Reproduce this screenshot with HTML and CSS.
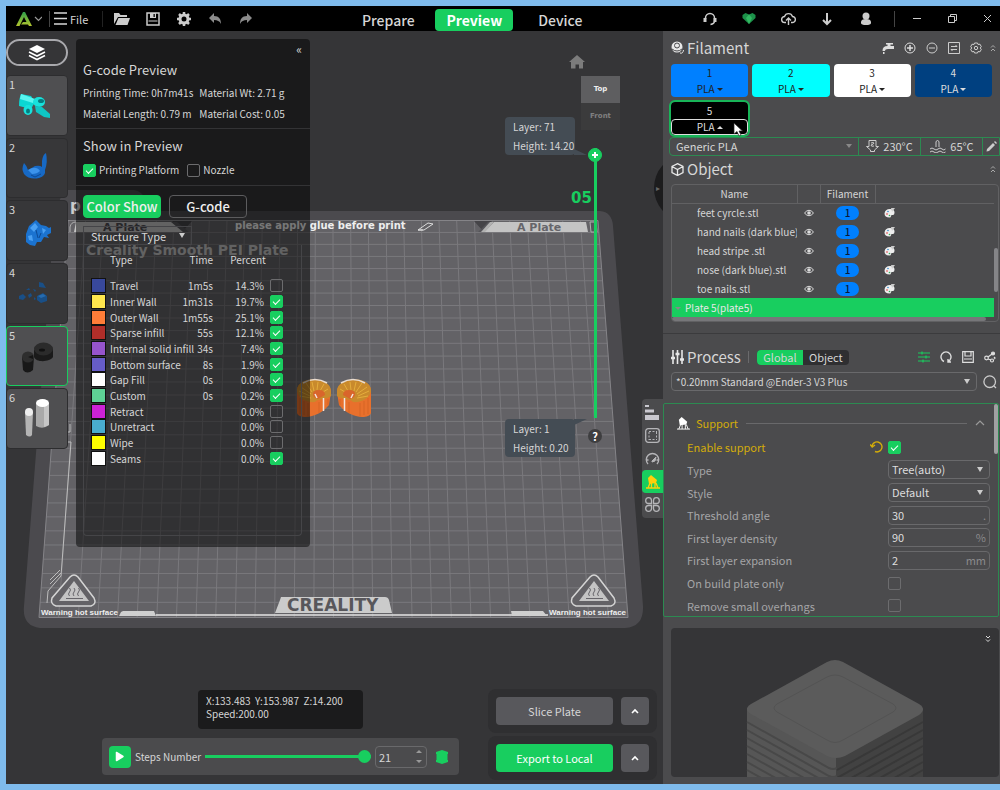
FILE: index.html
```html
<!DOCTYPE html>
<html lang="en">
<head>
    <meta charset="UTF-8">
    <meta name="viewport" content="width=device-width, initial-scale=1.0">
    <title>Creality Print</title>
    <link rel="stylesheet" href="styles.css">
</head>
<body>
<div class="app">
    <header class="topbar">
        <button class="logo" aria-label="Home">
            <svg width="27" height="16" viewBox="0 0 27 16"><defs><linearGradient id="lg" x1="0" y1="0" x2="0" y2="1"><stop offset="0" stop-color="#2f9e4a"/><stop offset="1" stop-color="#b4c52e"/></linearGradient></defs><path d="M8 1 1 15h3.500L9 6l2.500 5H8l-2 2.500h7l1 1.500h3L10 1z" fill="url(#lg)"/><path d="M20 6l3.500 3.500L27 6" fill="none" stroke="#999" stroke-width="1.200"/></svg>
        </button>
        <span class="bar-line"></span>
        <button class="file">
            <svg width="13" height="13" viewBox="0 0 13 13" stroke="#d8d8d8" stroke-width="1.300"><path d="M0 1h13M0 6.500h13M0 12h13"/></svg>File
        </button>
        <span class="bar-line dim"></span>
        <div class="tools">
            <button aria-label="Open"><svg width="16" height="14" viewBox="0 0 16 14" fill="#ccc"><path d="M0 12V1h5l1.500 2H13v2H4z"/><path d="M4.500 6H16l-2.500 7H1.500z"/></svg></button>
            <button aria-label="Save"><svg width="14" height="14" viewBox="0 0 14 14"><path d="M1 1h12v12H1z" fill="none" stroke="#ccc" stroke-width="1.500"/><path d="M4 1h6v5H4zM2.500 8.500h9v1h-9z" fill="#ccc"/><path d="M7.500 2h1.300v3H7.500z" fill="#000"/></svg></button>
            <button aria-label="Settings"><svg width="14" height="14" viewBox="0 0 14 14"><circle cx="7" cy="7" r="4" fill="none" stroke="#ccc" stroke-width="3"/><path d="M7 0v3M7 11v3M0 7h3M11 7h3M2 2l2 2M10 10l2 2M12 2l-2 2M4 10l-2 2" stroke="#ccc" stroke-width="2.500"/></svg></button>
            <button aria-label="Undo"><svg width="14" height="12" viewBox="0 0 14 12" fill="#8b8b8b"><path d="M6 0v3c5 0 7 3 7 8-1.500-3-3.500-4-7-4v3L1 5z"/></svg></button>
            <button aria-label="Redo"><svg width="14" height="12" viewBox="0 0 14 12" fill="#8b8b8b"><path d="M8 0v3C3 3 1 6 1 11c1.500-3 3.500-4 7-4v3l5-5z"/></svg></button>
        </div>
        <nav class="tabs">
            <button>Prepare</button>
            <button class="active">Preview</button>
            <button>Device</button>
        </nav>
        <div class="services">
            <button aria-label="Support"><svg width="14" height="14" viewBox="0 0 14 14" fill="none" stroke="#ccc"><path d="M2.500 7V6a4.500 4.500 0 0 1 9 0v3c0 2-1 3-4 3.500" stroke-width="1.500"/><path d="M2 6v4M12 6v4" stroke-width="3"/></svg></button>
            <button aria-label="Favourites"><svg width="14" height="13" viewBox="0 0 14 13"><path d="M7 12 .5 6 .5 3 3.500 1 7 2.500 10.500 1 13.500 3v3z" fill="#1c9149"/><path d="M7 12 4 6l3-3.500L10 6z" fill="#32b862"/></svg></button>
            <button aria-label="Upload"><svg width="15" height="14" viewBox="0 0 15 14" fill="none" stroke="#ccc" stroke-width="1.400"><path d="M5 10.500H3.800a3 3 0 0 1-.3-6 4.200 4.200 0 0 1 8 0 3 3 0 0 1-.3 6H10"/><path d="M7.500 13V6M5 8.500 7.500 6 10 8.500"/></svg></button>
            <button aria-label="Download"><svg width="12" height="14" viewBox="0 0 12 14" fill="none" stroke="#ccc" stroke-width="2"><path d="M6 1v11M2 8l4 4 4-4"/></svg></button>
            <button aria-label="Account"><svg width="12" height="14" viewBox="0 0 12 14" fill="#ccc"><circle cx="6" cy="4" r="3.500"/><path d="M1 10c0-2 2-3 5-3s5 1 5 3v1c0 1.500-2 2-5 2s-5-.5-5-2z"/></svg></button>
        </div>
        <span class="bar-line"></span>
        <div class="window-buttons">
            <button aria-label="Minimize"><svg width="8" height="8" viewBox="0 0 8 8" stroke="#ccc"><path d="M0 3.500h8"/></svg></button>
            <button aria-label="Restore"><svg width="9" height="9" viewBox="0 0 9 9" fill="none" stroke="#ccc"><path d="M.5 2.500h6v6h-6zM2.500 2.500v-2h6v6h-2"/></svg></button>
            <button aria-label="Close"><svg width="9" height="9" viewBox="0 0 9 9" stroke="#ccc"><path d="M1 1l7 7M8 1 1 8"/></svg></button>
        </div>
    </header>

    <main class="workspace">
        <section class="viewport">
            <svg class="scene" viewBox="6 31 657 753" preserveAspectRatio="xMidYMid slice">
                <!-- bed -->
                <path d="M64 190h70q8 1 12 10l6 11h448q12 1 13 15l30 380q1 21-18 22H40q-18-2-16-22l31-395z" fill="#4b4a4e"/>
                <path d="M68 220h530l30 397H39z" fill="#636266"/>
                <g id="grid" stroke="#7a797d" stroke-width="1"></g>
                <path d="M68 220.500h530l30 397H39z" fill="none" stroke="#858488"/>
                <path d="M474 221h18l-9 10zM192 221h-20l11 10z" fill="#454448"/>
                <path d="M492 222h94l2 10H481zM76 222h98l10 10H74z" fill="#c4c4c4"/>
                <path d="M488 222h6l-10 10h-6zM171 222h6l12 10h-6z" fill="#555459"/>
                <path d="M481 232l9-10h4l-9 10z" fill="#b0b0b0"/>
                <path d="M590 222h6l1 10h-6z" fill="#555459" stroke="#b0b0b0"/>
                <path d="M70 232v-5q1-5 6-5" fill="none" stroke="#b0b0b0"/>
                <g class="bed-text">
                    <text class="tag" x="517" y="231" fill="#66656a">A Plate</text>
                    <text class="tag" x="103" y="231" fill="#4e4d52">A Plate</text>
                    <text x="235" y="229" fill="#eee">please apply glue before print</text>
                    <text class="plate-name" x="86" y="255" fill="#c4c4c4">Creality Smooth PEI Plate</text>
                    <text class="big" x="70" y="211" fill="#ccc">p</text>
                    <text class="big" x="571" y="203" fill="#18ce5f">05</text>
                    <text class="tiny" x="41" y="615" fill="#eee">Warning hot surface</text>
                    <text class="tiny" x="549" y="615" fill="#eee">Warning hot surface</text>
                </g>
                <path d="M418 230l10-7 5 1-9 6zM418 230h5" fill="none" stroke="#ddd"/>
                <!-- bottom edge decoration -->
                <path d="M156 615h392" stroke="#e4e4e4" stroke-width="1.500"/>
                <path d="M121 612l2-1h31l2 5h-37zM511 611h32l4 5h-35z" fill="#cfcfcf"/>
                <path d="M281 597h104q3 0 4 3l3 13H275l5-13z" fill="#cbcbcb"/>
                <text class="brand" x="287" y="611" fill="#58575b">CREALITY</text>
                <path d="M71 442l-10 134-13 15-1 12M50 580l10-10M50 584l11-11M71 442h-3M70 424v8h-3" fill="none" stroke="#bdbdbd"/>
                <g id="warn">
                    <path d="M70 577q4-4 8 0l16 21q3 6-3 8H56q-6-2-4-8z" fill="#636266" stroke="#d4d4d4" stroke-width="1.500"/>
                    <path d="M74 581l15 20H59z" fill="#c4c4c4"/>
                    <path d="M69.500 588q2 2 0 4t0 4M74 588q2 2 0 4t0 4M78.500 588q2 2 0 4t0 4M66 598.500h17" fill="none" stroke="#66656a"/>
                </g>
                <use href="#warn" x="520"/>
                <!-- sliced parts -->
                <g id="part">
                    <path d="M337 392c0-15 33-16 34-2v23c-1 4-9 5-15 3-7-2-12-5-17-11z" fill="#e8702c"/>
                    <path d="M337 391c0-15 33-16 34-1 0 8-10 13-18 12-3-4-12-2-16-6z" fill="#c98a2c"/>
                    <path d="M340 389l5 3M344 384l4 7M350 382l1 8M356 382l-2 9M362 383l-6 9M367 387l-10 7M369 391l-11 5M368 396l-11 2" stroke="#e5ad3c"/>
                    <path d="M343 395q0-5 6-5t6 4q0 4-5 5z" fill="#d9652b"/>
                    <path d="M341 383q12-7 24 0" fill="none" stroke="#e8dcd2" stroke-width="1.500"/>
                    <path d="M344.500 398v13M353 394l-2 4" stroke="#f3e6df" stroke-width="1.500"/>
                    <path d="M360 403v13M364 401v14M340 399v6M349 402v11M368 398v16" stroke="#cf5f24" stroke-width=".7"/>
                </g>
                <use href="#part" transform="matrix(-1 0 0 1 668 0)"/>
            </svg>

            <aside class="plates">
                <button class="all-plates" aria-label="All plates"><svg width="18" height="17" viewBox="0 0 18 17"><path d="M9 1l8 4-8 4-8-4z" fill="#fff"/><path d="M1 8l8 4 8-4M1 11.500l8 4 8-4" fill="none" stroke="#fff" stroke-width="1.600"/></svg></button>
                <div class="plate-list">
                    <button class="plate light">1<svg viewBox="0 0 60 60"><path d="M15 19l10 2 4 6-4 7-12-3q0-8 2-12z" fill="#0bd7d3"/><path d="M15 19l14 5-2 4-13-4z" fill="#5af5f0"/><ellipse cx="33" cy="27" rx="6" ry="5" fill="#18e2dc"/><ellipse cx="35" cy="26" rx="3" ry="2" fill="#067c80"/><ellipse cx="22" cy="35" rx="4.500" ry="5" fill="#18e2dc"/><ellipse cx="22" cy="36" rx="2" ry="2.500" fill="#067c80"/><path d="M29 31l7 1 8 7v4l-6-1-8-5z" fill="#0fc6c4"/></svg></button>
                    <button class="plate">2<svg viewBox="0 0 60 60"><path d="M18 25q3 3 4 7l7-4q5-1 7 1 0-1 0-6 1-7 4-8 2 9-1 17 1 6-6 8-10 2-15-4-3-5 0-11z" fill="#1769c5"/><path d="M22 32q8-5 12 1-3 3-8 3z" fill="#3b93ec"/><path d="M25 37l4 2 6-3" fill="none" stroke="#0d4a95"/></svg></button>
                    <button class="plate">3<svg viewBox="0 0 60 60"><path d="M20 34l3-8 7-6 5 5 5 1 3 2 2-1v6l-4 2 2 3-5-1-3 5h-4l-2 4-5-1-4-3z" fill="#1b73d0"/><path d="M24 28l5-5 3 4-4 5zM36 28l4 2-3 4zM22 36l4-1 1 6-4-1z" fill="#4aa0f2"/><path d="M30 30l2 8M35 33l-2 5" stroke="#0d4a95"/></svg></button>
                    <button class="plate">4<svg viewBox="0 0 60 60"><path d="M33 19l4 1 3 5-7-1zM31 33l6-3 4 3v5l-6 2-4-3zM13 33l4-2 3 3-3 3-4-1zM20 27l3-2 1 2zM22 32l3-2 1 3-3 2zM27 26l3 1-1 2zM28 34l2 2-2 1z" fill="#194f87"/><path d="M32 33l5-2 3 2-5 2z" fill="#256bb0"/></svg></button>
                    <button class="plate light selected">5<svg viewBox="0 0 60 60"><path d="M28 24v7c2 6 16 5 19 0v-8z" fill="#1a1a1a"/><ellipse cx="37.500" cy="23" rx="9.500" ry="6.500" fill="#2b2b2b"/><ellipse cx="36" cy="24" rx="3" ry="1.500" fill="#111"/><path d="M16 31l1 13q4 5 10 0l1-13z" fill="#181818"/><ellipse cx="22" cy="31" rx="6" ry="5.500" fill="#2e2e2e"/><path d="M22 31l5-2v4z" fill="#151515"/></svg></button>
                    <button class="plate light">6<svg viewBox="0 0 60 60"><path d="M30 15v23q7 4 13-1V15z" fill="#a9a9a9"/><path d="M38 17v22l5-2V15z" fill="#c6c6c6"/><ellipse cx="36.500" cy="15" rx="6.500" ry="4" fill="#fff"/><path d="M19 24l1 23q4 3 6 0l1-23z" fill="#b4b4b4"/><ellipse cx="23" cy="24" rx="4" ry="4" fill="#eee"/></svg></button>
                </div>
            </aside>

            <section class="gcode-panel">
                <button class="collapse" aria-label="Collapse">«</button>
                <div class="panel-part">
                    <h2>G-code Preview</h2>
                    <dl class="stats">
                        <div><dt>Printing Time:</dt> <dd>0h7m41s</dd></div>
                        <div><dt>Material Wt:</dt> <dd>2.71 g</dd></div>
                        <div><dt>Material Length:</dt> <dd>0.79 m</dd></div>
                        <div><dt>Material Cost:</dt> <dd>0.05</dd></div>
                    </dl>
                </div>
                <div class="panel-part show-in">
                    <h2>Show in Preview</h2>
                    <label><input type="checkbox" checked>Printing Platform</label>
                    <label><input type="checkbox">Nozzle</label>
                </div>
                <div class="panel-part legend-part">
                    <div class="mode">
                        <button class="active">Color Show</button>
                        <button>G-code</button>
                    </div>
                    <div class="select structure"><select aria-label="Color scheme"><option>Structure Type</option></select></div>
                    <div class="legend">
                        <table>
                            <colgroup><col class="swatch-col"><col><col class="time-col"><col class="percent-col"><col class="check-col"></colgroup>
                            <thead><tr><th></th><th>Type</th><th>Time</th><th colspan="2">Percent</th></tr></thead>
                            <tbody>
                                <tr><td><i class="travel"></i></td><td>Travel</td><td>1m5s</td><td>14.3%</td><td><input type="checkbox" aria-label="Travel"></td></tr>
                                <tr><td><i class="inner"></i></td><td>Inner Wall</td><td>1m31s</td><td>19.7%</td><td><input type="checkbox" aria-label="Inner Wall" checked></td></tr>
                                <tr><td><i class="outer"></i></td><td>Outer Wall</td><td>1m55s</td><td>25.1%</td><td><input type="checkbox" aria-label="Outer Wall" checked></td></tr>
                                <tr><td><i class="sparse"></i></td><td>Sparse infill</td><td>55s</td><td>12.1%</td><td><input type="checkbox" aria-label="Sparse infill" checked></td></tr>
                                <tr><td><i class="solid"></i></td><td>Internal solid infill</td><td>34s</td><td>7.4%</td><td><input type="checkbox" aria-label="Internal solid infill" checked></td></tr>
                                <tr><td><i class="bottom"></i></td><td>Bottom surface</td><td>8s</td><td>1.9%</td><td><input type="checkbox" aria-label="Bottom surface" checked></td></tr>
                                <tr><td><i class="gap"></i></td><td>Gap Fill</td><td>0s</td><td>0.0%</td><td><input type="checkbox" aria-label="Gap Fill" checked></td></tr>
                                <tr><td><i class="custom"></i></td><td>Custom</td><td>0s</td><td>0.2%</td><td><input type="checkbox" aria-label="Custom" checked></td></tr>
                                <tr><td><i class="retract"></i></td><td>Retract</td><td></td><td>0.0%</td><td><input type="checkbox" aria-label="Retract"></td></tr>
                                <tr><td><i class="unretract"></i></td><td>Unretract</td><td></td><td>0.0%</td><td><input type="checkbox" aria-label="Unretract"></td></tr>
                                <tr><td><i class="wipe"></i></td><td>Wipe</td><td></td><td>0.0%</td><td><input type="checkbox" aria-label="Wipe"></td></tr>
                                <tr><td><i class="seams"></i></td><td>Seams</td><td></td><td>0.0%</td><td><input type="checkbox" aria-label="Seams" checked></td></tr>
                            </tbody>
                        </table>
                    </div>
                </div>
            </section>

            <button class="home" aria-label="Reset view"><svg width="16" height="14" viewBox="0 0 16 14" fill="#7c7c7c"><path d="M8 0l8 7h-2v6.500h-4V9.500H6.500v4H2V7H0z"/></svg></button>
            <div class="view-cube"><span>Top</span><span>Front</span></div>
            <div class="layer-tip upper">Layer: 71<br>Height: 14.20</div>
            <div class="layer-tip lower">Layer: 1<br>Height: 0.20</div>
            <input class="layer-slider" type="range" min="1" max="71" value="71" aria-label="Layer">
            <button class="help">?</button>
            <button class="fold-side" aria-label="Hide sidebar">▸</button>

            <nav class="param-tabs">
                <button aria-label="Quality"><svg width="15" height="15" viewBox="0 0 15 15" fill="#c9c8cf"><path d="M0 0h4v2H0zM0 4.500h9v3H0zM0 10h14v5H0z"/></svg></button>
                <button aria-label="Strength"><svg width="15" height="15" viewBox="0 0 15 15" fill="none" stroke="#b5b5b8"><rect x=".7" y=".7" width="13.600" height="13.600" rx="2.500" stroke-width="1.300"/><path d="M4 3.500h8M4 11.500h8M4 4v8M11.500 4v8" stroke-dasharray="2 1.500"/></svg></button>
                <button aria-label="Speed"><svg width="15" height="13" viewBox="0 0 15 13" fill="none" stroke="#b5b5b8"><path d="M3 12a6.200 6.200 0 1 1 9 0M1.500 8h2M13.500 8h-2" stroke-width="1.400"/><path d="M7 9l4-4-1 4-3 1z" fill="#b5b5b8"/></svg></button>
                <button class="active" aria-label="Support"><svg width="14" height="14" viewBox="0 0 14 14"><path d="M2 3l3-3 6 5-1 3-7 1z" fill="#ffcf0a"/><path d="M0 13h14M2 13l2-5M5.500 13V8M9 13V8M12 13l-2-5" stroke="#ffcf0a" stroke-width="1.300"/></svg></button>
                <button aria-label="Others"><svg width="15" height="15" viewBox="0 0 15 15" fill="none" stroke="#b5b5b8" stroke-width="1.300"><path d="M6.500 6.500H3.500a2.900 2.900 0 1 1 3-3zM8.500 6.500h3a2.900 2.900 0 1 0-3-3zM6.500 8.500H3.500a2.900 2.900 0 1 0 3 3zM8.500 8.500h3a2.900 2.900 0 1 1-3 3z"/></svg></button>
            </nav>

            <div class="position-tip">X:133.483&nbsp; Y:153.987&nbsp; Z:14.200<br>Speed:200.00</div>
            <div class="steps">
                <button class="play" aria-label="Play"><svg width="10" height="11" viewBox="0 0 10 11"><path d="M1.500 1.500v8l6.500-4z" fill="#fff" stroke="#fff" stroke-width="1.500" stroke-linejoin="round"/></svg></button>
                <label for="steps">Steps Number</label>
                <input id="steps" type="range" min="1" max="21" value="21">
                <div class="spin"><input type="text" value="21" aria-label="Step"><span></span></div>
                <svg width="14" height="14" viewBox="0 0 14 14" fill="#18ce5f"><path d="M7 0l6 2v2l-1 1 1 1-1 1 1 1-1 1 1 1v2l-6 2-6-2v-2l1-1-1-1 1-1-1-1 1-1-1-1V2z"/></svg>
            </div>
            <div class="actions">
                <div><button class="wide">Slice Plate</button><button class="more" aria-label="Slice options"><svg width="8" height="6" viewBox="0 0 8 6" fill="none" stroke="#fff" stroke-width="1.600"><path d="M1 5l3-3 3 3"/></svg></button></div>
                <div><button class="wide green">Export to Local</button><button class="more" aria-label="Export options"><svg width="8" height="6" viewBox="0 0 8 6" fill="none" stroke="#fff" stroke-width="1.600"><path d="M1 5l3-3 3 3"/></svg></button></div>
            </div>
        </section>

        <aside class="sidebar">
            <div class="head">
                <svg width="13" height="13" viewBox="0 0 13 13"><circle cx="6" cy="6" r="5.500" fill="#e8e8e8"/><circle cx="6" cy="4.500" r="2.500" fill="none" stroke="#4b4b4d"/><path d="M1 8q5 4 10 0M10 12q3 1 3-4" fill="none" stroke="#4b4b4d"/><path d="M9 12q3 1 3.500-3" fill="none" stroke="#e8e8e8"/></svg>
                <h1>Filament</h1>
                <div class="head-tools">
                    <button aria-label="Flush"><svg width="12" height="12" viewBox="0 0 12 12" fill="#ddd"><path d="M4 1h7v1.500H8.500V4H12v3H6q-3 0-3 2H.5q0-5 5-5V2.500H4zM1 10h1.500v2H1z"/></svg></button>
                    <button aria-label="Add"><svg width="12" height="12" viewBox="0 0 12 12" fill="none" stroke="#ddd"><circle cx="6" cy="6" r="5"/><path d="M3 6h6M6 3v6" stroke-width="1.500"/></svg></button>
                    <button aria-label="Remove"><svg width="12" height="12" viewBox="0 0 12 12" fill="none" stroke="#ccc"><circle cx="6" cy="6" r="5"/><path d="M3 6h6"/></svg></button>
                    <button aria-label="Sync"><svg width="12" height="12" viewBox="0 0 12 12" fill="none" stroke="#ccc"><path d="M.5.5h11v11H.5zM3 4.500h6L7.500 3M9 7.500H3L4.500 9"/></svg></button>
                    <button aria-label="Filament settings"><svg width="12" height="12" viewBox="0 0 12 12" fill="none" stroke="#ccc"><path d="M4.500 1h3l.5 1.500 2-.3 1.300 2.500L10.200 6l1.100 1.300L10 9.800l-2-.3L7.500 11h-3L4 9.500l-2 .3L.7 7.300 1.800 6 .7 4.700 2 2.200l2 .3z"/><circle cx="6" cy="6" r="1.700"/></svg></button>
                </div>
                <svg class="fold" width="6" height="8" viewBox="0 0 6 8" fill="none" stroke="#aaa"><path d="M1 3.500 3 1.500l2 2M1 7l2-2 2 2"/></svg>
            </div>
            <div class="filaments">
                <button class="f1">1<span>PLA</span></button>
                <button class="f2">2<span>PLA</span></button>
                <button class="f3">3<span>PLA</span></button>
                <button class="f4">4<span>PLA</span></button>
                <button class="f5 selected">5<span>PLA</span><svg class="pointer" width="10" height="15" viewBox="0 0 10 15"><path d="M1 1v11l3-2.500L6 14l2-1-2-4h3.500z" fill="#fff" stroke="#222" stroke-width=".7"/></svg></button>
            </div>
            <div class="preset">
                <div class="select"><select aria-label="Filament preset"><option>Generic PLA</option></select></div>
                <span><svg width="13" height="13" viewBox="0 0 13 13" fill="none" stroke="#ccc"><path d="M3 .5h7v6h2.500l-4 3.500v1.500h-4V10l-4-3.500H3zM5 3q3-1 3 0t-3 2q0 2 3 1"/></svg>230°C</span>
                <span><svg width="17" height="13" viewBox="0 0 17 13" fill="none" stroke="#ccc"><path d="M7 7V1.500q1.500-2 3 0V7M1 9q2-2 4 0t4 0 4 0 3.500 0M1 12q2-2 4 0t4 0 4 0 3.500 0"/></svg>65°C</span>
                <button aria-label="Edit preset"><svg width="11" height="11" viewBox="0 0 11 11" fill="#ccc"><path d="M1 8l6-6 2 2-6 6-2.500.5zM8 1l1-1 2 2-1 1z"/></svg></button>
            </div>

            <div class="head object-head">
                <svg width="13" height="13" viewBox="0 0 13 13" fill="none" stroke="#e8e8e8" stroke-width="1.300"><path d="M6.500.7 12 3.500v6l-5.500 3L1 9.500v-6zM1 3.500l5.500 3 5.500-3M6.500 6.500v6"/></svg>
                <h1>Object</h1>
                <svg class="fold" width="6" height="8" viewBox="0 0 6 8" fill="none" stroke="#aaa"><path d="M1 3.500 3 1.500l2 2M1 7l2-2 2 2"/></svg>
            </div>
            <div class="objects">
                <table>
                    <thead><tr><th>Name</th><th></th><th>Filament</th><th></th></tr></thead>
                    <tbody>
                        <tr><td>feet cyrcle.stl</td><td><svg class="eye"><use href="#eye"/></svg></td><td><b>1</b></td><td><svg class="palette"><use href="#palette"/></svg></td></tr>
                        <tr><td>hand nails (dark blue).stl</td><td><svg class="eye"><use href="#eye"/></svg></td><td><b>1</b></td><td><svg class="palette"><use href="#palette"/></svg></td></tr>
                        <tr><td>head stripe .stl</td><td><svg class="eye"><use href="#eye"/></svg></td><td><b>1</b></td><td><svg class="palette"><use href="#palette"/></svg></td></tr>
                        <tr><td>nose (dark blue).stl</td><td><svg class="eye"><use href="#eye"/></svg></td><td><b>1</b></td><td><svg class="palette"><use href="#palette"/></svg></td></tr>
                        <tr><td>toe nails.stl</td><td><svg class="eye"><use href="#eye"/></svg></td><td><b>1</b></td><td><svg class="palette"><use href="#palette"/></svg></td></tr>
                        <tr class="plate-row"><td colspan="4">Plate 5(plate5)</td></tr>
                    </tbody>
                </table>
                <div class="scroll-x"></div>
                <div class="scroll-y"></div>
            </div>

            <div class="head process-head">
                <svg width="13" height="14" viewBox="0 0 13 14" stroke="#e8e8e8" stroke-width="1.600"><path d="M2 0v14M6.500 0v14M11 0v14"/><path d="M0 8h4M4.500 4h4M9 9.500h4" stroke-width="2.500"/></svg>
                <h1>Process</h1>
                <span class="bar-line"></span>
                <div class="scope"><button class="active">Global</button><button>Object</button></div>
                <div class="head-tools">
                    <button aria-label="Advanced"><svg width="12" height="12" viewBox="0 0 12 12" stroke="#18ce5f" stroke-width="1.200"><path d="M0 2h12M0 6h12M0 10h12M4 .5v3M8 4.500v3M5 8.500v3"/></svg></button>
                    <button aria-label="Reset"><svg width="12" height="12" viewBox="0 0 12 12" fill="none" stroke="#ddd" stroke-width="1.400"><path d="M4 10.500A5 5 0 1 1 8 10.500M8 8v3h3"/></svg></button>
                    <button aria-label="Save preset"><svg width="12" height="12" viewBox="0 0 12 12" fill="none" stroke="#ddd" stroke-width="1.200"><path d="M.7.700h10.600v10.600H.7zM3 1v4h6V1M2 8h8"/></svg></button>
                    <button aria-label="Compare"><svg width="12" height="12" viewBox="0 0 12 12" fill="none" stroke="#ddd" stroke-width="1.200"><circle cx="2.500" cy="7" r="1.800"/><circle cx="9" cy="2.500" r="1.500" fill="#ddd"/><circle cx="8" cy="9.500" r="1.500"/><path d="M4 6l4-3M4 8l3 1M10 6l1 1-1 1"/></svg></button>
                </div>
            </div>
            <div class="process-preset">
                <div class="select"><select aria-label="Process preset"><option>*0.20mm Standard @Ender-3 V3 Plus</option></select></div>
                <button aria-label="Search"><svg width="14" height="14" viewBox="0 0 14 14" fill="none" stroke="#ccc" stroke-width="1.300"><circle cx="6.700" cy="6.700" r="5.800"/><path d="M11 11l2 2"/></svg></button>
            </div>

            <section class="params">
                <div class="params-title">
                    <svg width="13" height="13" viewBox="0 0 14 14"><path d="M2 3l3-3 6 5-1 3-7 1z" fill="#fff"/><path d="M0 13h14M2 13l2-5M5.500 13V8M9 13V8M12 13l-2-5" stroke="#fff"/></svg>
                    <h3>Support</h3><hr>
                    <svg width="10" height="6" viewBox="0 0 10 6" fill="none" stroke="#999" stroke-width="1.200"><path d="M1 5l4-4 4 4"/></svg>
                </div>
                <div class="rows">
                    <div class="row changed"><label for="p1">Enable support</label><svg width="13" height="12" viewBox="0 0 13 12" fill="none" stroke="#d3ac0a" stroke-width="1.400"><path d="M2 5.500A5 5 0 1 1 5 10.500M0 3.500l2.200 2.500L5 4"/></svg><div><input type="checkbox" id="p1" checked></div></div>
                    <div class="row"><label for="p2">Type</label><div class="select"><select id="p2"><option>Tree(auto)</option></select></div></div>
                    <div class="row"><label for="p3">Style</label><div class="select"><select id="p3"><option>Default</option></select></div></div>
                    <div class="row"><label for="p4">Threshold angle</label><div class="field"><input type="text" id="p4" value="30"><span>.</span></div></div>
                    <div class="row"><label for="p5">First layer density</label><div class="field"><input type="text" id="p5" value="90"><span>%</span></div></div>
                    <div class="row"><label for="p6">First layer expansion</label><div class="field"><input type="text" id="p6" value="2"><span>mm</span></div></div>
                    <div class="row"><label for="p7">On build plate only</label><div><input type="checkbox" id="p7"></div></div>
                    <div class="row"><label for="p8">Remove small overhangs</label><div><input type="checkbox" id="p8"></div></div>
                </div>
                <div class="scroll-y"></div>
            </section>

            <div class="hint">
                <svg viewBox="671 628 328 149" preserveAspectRatio="xMidYMin slice">
                    <path d="M747 708v90h89v-90z" fill="#565656"/>
                    <path d="M836 708v90h87v-90z" fill="#424242"/>
                    <g fill="none" stroke-width="2">
                        <path stroke="#484848" d="M747 722l82 46q4 2 8 0M747 730l82 46q4 2 8 0M747 738l82 46M747 746l82 46M747 754l82 46M747 762l82 46M747 770l82 46"/>
                        <path stroke="#383838" d="M923 722l-86 48M923 730l-86 48M923 738l-86 48M923 746l-86 48M923 754l-86 48M923 762l-86 48M923 770l-86 48"/>
                    </g>
                    <path d="M827 662q8-4 16 0l76 42q8 5 0 11l-74 41q-9 4-18 0l-76-42q-8-5 0-10z" fill="#5b5b5b"/>
                    <path d="M827 705m0-28q8-4 16 0l50 27q6 4 0 8l-50 28q-8 5-16 0l-50-28q-6-4 0-8z" fill="none" stroke="#535353"/>
                </svg>
                <button aria-label="Fold preview"><svg width="6" height="8" viewBox="0 0 6 8" fill="none" stroke="#ddd"><path d="M1 1l2 2 2-2M1 4.500l2 2 2-2"/></svg></button>
            </div>
        </aside>
    </main>
</div>

<svg class="symbols" width="0" height="0">
    <symbol id="eye" viewBox="0 0 10 8"><path d="M.5 4Q5-1.500 9.500 4 5 9.500.5 4z" fill="none" stroke="#ddd"/><circle cx="5" cy="4" r="1.800" fill="#ddd"/></symbol>
    <symbol id="palette" viewBox="0 0 11 10"><path d="M6 1Q1 1 .5 5.500q0 4 5 4 1.500 0 1.500-1.500t2-1q1.500 0 1.500-3Q10 1 6 1z" fill="#eee"/><path d="M7 0l4 0-3 4z" fill="#ccc"/><circle cx="3" cy="6" r=".8" fill="#d33"/><circle cx="4" cy="3.500" r=".8" fill="#38c"/><circle cx="5.500" cy="7.500" r=".8" fill="#3a5"/></symbol>
</svg>
<script src="grid.js"></script>
</body>
</html>
```
FILE: styles.css
```css
* {
    box-sizing: border-box;
}

body {
    margin: 0;
    background-color: #7fbbec;
    color: #d6d6d6;
    font-family: "Noto Sans CJK SC", "Noto Sans", sans-serif;
    font-size: 11px;
    line-height: 16px;
}

button, input, select {
    margin: 0;
    padding: 0;
    border: 0;
    background: none;
    color: inherit;
    font: inherit;
}

button svg {
    display: block;
    margin: auto;
}

h1, h2, h3, dl, dd {
    margin: 0;
    font-weight: normal;
}

input[type="checkbox"] {
    appearance: none;
    display: block;
    width: 13px;
    height: 13px;
    border: 1px solid #6c6c6e;
    border-radius: 2px;
}

input[type="checkbox"]:checked {
    border-color: #18ce5f;
    background-color: #18ce5f;
}

input[type="checkbox"]:checked::after {
    content: "";
    display: block;
    width: 6px;
    height: 3px;
    margin: 3px auto 0;
    border-left: 1px solid #fff;
    border-bottom: 1px solid #fff;
    transform: rotate(-45deg);
}

.select {
    position: relative;
    display: flex;
    border: 1px solid #69696b;
    border-radius: 4px;
}

.select select {
    appearance: none;
    width: 100%;
    outline: 0;
}

.select::after {
    content: "";
    position: absolute;
    right: 6px;
    top: 50%;
    margin-top: -3px;
    border: 3px solid transparent;
    border-top: 5px solid #ccc;
    border-bottom: 0;
}

.app {
    display: flex;
    flex-direction: column;
    height: 100vh;
    padding: 6px 0 6px 6px;
}

/* top bar */
.topbar {
    display: flex;
    align-items: center;
    height: 25px;
    padding-left: 9px;
    background-color: #000;
}

.bar-line {
    width: 1px;
    height: 16px;
    background-color: #444;
}

.bar-line.dim {
    margin-left: 14px;
    background-color: #222;
}

.logo {
    margin-right: 7px;
}

.file {
    display: flex;
    align-items: center;
    gap: 3px;
    margin-left: 4px;
}

.file svg {
    margin: 0;
}

.tools {
    display: flex;
    margin-left: 3px;
}

.tools button {
    width: 31px;
}

.tabs {
    display: flex;
    gap: 8px;
    margin-left: 88px;
    align-self: flex-end;
}

.tabs button {
    width: 78px;
    height: 22px;
    border-radius: 4px;
    font-size: 14px;
    font-weight: 500;
}

.tabs .active {
    background-color: #18ce5f;
    color: #fff;
    font-weight: bold;
}

.services {
    display: flex;
    gap: 9px;
    margin: 0 13px 0 auto;
}

.services button {
    width: 30px;
}

.window-buttons {
    display: flex;
    gap: 9px;
    margin-left: 9px;
}

.window-buttons button {
    width: 26px;
}

.workspace {
    display: grid;
    grid-template-columns: 1fr 337px;
    flex: 1;
    min-height: 0;
}

/* 3d view, everything else floats over it */
.viewport {
    position: relative;
    overflow: hidden;
    background-color: #353537;
}

.scene {
    position: absolute;
    width: 100%;
    height: 100%;
}

.bed-text text {
    font: bold 10px "DejaVu Sans", sans-serif;
}

.bed-text .tag {
    font-size: 11px;
}

.bed-text .plate-name {
    font-size: 14px;
}

.bed-text .big {
    font-size: 15px;
}

.bed-text .tiny {
    font: bold 8px "Liberation Sans", sans-serif;
}

.brand {
    font: bold 17px "DejaVu Sans", sans-serif;
}

.plates {
    position: absolute;
    left: 0;
    top: 8px;
    width: 62px;
}

.all-plates {
    width: 100%;
    height: 27px;
    margin-bottom: 9px;
    border: 2px solid #a9a9ad;
    border-radius: 14px;
}

.plate-list {
    display: grid;
    grid-template-rows: repeat(6, 1fr);
    gap: 2px;
    height: 374px;
}

.plate {
    position: relative;
    padding: 0 2px;
    border: 1px solid #2d2d2f;
    border-radius: 4px;
    background-color: #373739;
    display: flex;
    align-items: flex-start;
}

.plate svg {
    position: absolute;
    left: -1px;
    top: -1px;
    width: 60px;
    height: 60px;
}

.plate.light {
    background-color: #4f4f51;
}

.plate.selected {
    border-color: #18ce5f;
}

/* g-code panel */
.gcode-panel {
    position: absolute;
    left: 70px;
    top: 8px;
    width: 234px;
    height: 508px;
    padding-top: 23px;
    border-radius: 4px;
    background-color: rgba(0, 0, 0, 0.5);
    display: flex;
    flex-direction: column;
    font-size: 10px;
}

.collapse {
    position: absolute;
    right: 8px;
    top: 2px;
    font-size: 12px;
}

.panel-part {
    padding: 0 8px 0 7px;
    border-bottom: 1px solid #333335;
}

.gcode-panel h2 {
    font-size: 13px;
}

.stats {
    display: grid;
    grid-template-columns: max-content max-content;
    gap: 5px 6px;
    padding: 7px 0 6px;
    white-space: nowrap;
}

.stats dt, .stats dd {
    display: inline;
}

.show-in {
    display: flex;
    flex-wrap: wrap;
    column-gap: 8px;
    padding-top: 9px;
    padding-bottom: 7px;
}

.show-in h2 {
    width: 100%;
    margin-bottom: 8px;
}

.show-in label {
    display: flex;
    align-items: center;
    gap: 3px;
}

.legend-part {
    display: flex;
    flex-direction: column;
    flex: 1;
    padding-top: 9px;
    padding-bottom: 11px;
    border: 0;
}

.mode {
    display: flex;
    gap: 8px;
    margin-bottom: 8px;
}

.mode button {
    width: 78px;
    height: 23px;
    border: 1px solid #5c5c5e;
    border-radius: 4px;
    color: #eee;
    font-size: 13px;
    font-weight: 500;
}

.mode .active {
    border-color: #18ce5f;
    background-color: #18ce5f;
}

.structure {
    width: 109px;
    height: 19px;
    border-color: #444447;
    border-radius: 0;
    font-size: 11px;
}

.structure select {
    padding-left: 7px;
}

.legend {
    flex: 1;
    padding: 7px 18px 0 7px;
    border: 1px solid #454548;
    border-top: 0;
    border-radius: 0 0 4px 4px;
}

.legend table {
    width: 100%;
    height: 214px;
    border-collapse: collapse;
    table-layout: fixed;
    line-height: 15px;
}

.legend th, .legend td {
    padding: 0;
    text-align: right;
    font-weight: normal;
    white-space: nowrap;
}

.legend thead tr {
    height: 26px;
    vertical-align: top;
}

.legend th:nth-child(2), .legend td:nth-child(2) {
    text-align: left;
}

.legend th:last-child {
    text-align: center;
}

.swatch-col {
    width: 19px;
}

.time-col {
    width: 32px;
}

.percent-col {
    width: 51px;
}

.check-col {
    width: 19px;
}

.legend td input {
    margin-left: 6px;
}

.legend i {
    display: block;
    width: 15px;
    height: 15px;
    border: 1px solid #111;
}

.travel { background-color: #38489b; }
.inner { background-color: #ffe64d; }
.outer { background-color: #ff7d38; }
.sparse { background-color: #b02e29; }
.solid { background-color: #9654cc; }
.bottom { background-color: #665cc7; }
.gap, .seams { background-color: #fff; }
.custom { background-color: #5ed194; }
.retract { background-color: #cd22d6; }
.unretract { background-color: #49adcf; }
.wipe { background-color: #ff0; }

/* view controls */
.home {
    position: absolute;
    right: 78px;
    top: 24px;
}

.view-cube {
    position: absolute;
    right: 43px;
    top: 45px;
    width: 39px;
    font: bold 7px "DejaVu Sans", sans-serif;
    text-align: center;
}

.view-cube span {
    display: block;
    background-color: #5e5e60;
    color: #eee;
    line-height: 27px;
}

.view-cube span + span {
    background-color: #3b3b3c;
    color: #808080;
}

.layer-tip {
    position: absolute;
    right: 88px;
    width: 70px;
    height: 38px;
    padding-left: 8px;
    border-radius: 4px;
    background-color: #444c54;
    font-size: 10px;
    line-height: 19px;
    white-space: nowrap;
}

.layer-tip::after {
    content: "";
    position: absolute;
    left: 69px;
    border: 0 solid transparent;
    border-left: 13px solid #444c54;
}

.upper {
    top: 86px;
}

.upper::after {
    bottom: 0;
    border-top-width: 6px;
}

.lower {
    top: 388px;
}

.lower::after {
    top: 0;
    border-bottom-width: 6px;
}

.layer-slider {
    position: absolute;
    right: 61px;
    top: 117px;
    width: 14px;
    height: 270px;
    appearance: none;
    writing-mode: vertical-lr;
    direction: rtl;
}

.layer-slider::-webkit-slider-runnable-track {
    width: 3px;
    background-color: #18ce5f;
}

.layer-slider::-webkit-slider-thumb {
    appearance: none;
    width: 14px;
    height: 14px;
    margin-left: -6px;
    border: 1px solid #18ce5f;
    border-radius: 50%;
    background: linear-gradient(#fff, #fff) center / 6px 2px no-repeat, linear-gradient(#fff, #fff) center / 2px 6px no-repeat, #18ce5f;
}

.help {
    position: absolute;
    right: 61px;
    top: 398px;
    width: 14px;
    height: 14px;
    border-radius: 50%;
    background-color: #3e3e40;
    color: #fff;
    font-size: 11px;
    font-weight: bold;
    line-height: 14px;
}

.fold-side {
    position: absolute;
    right: -46px;
    top: 126px;
    width: 55px;
    height: 62px;
    padding-left: 2px;
    border-radius: 50%;
    background-color: #1c1c1d;
    color: #666;
    font-size: 8px;
    text-align: left;
}

.param-tabs {
    position: absolute;
    right: 0;
    top: 368px;
    width: 21px;
    padding: 2px 0;
    border-radius: 4px 0 0 4px;
    background-color: #4b4b4d;
}

.param-tabs button {
    display: block;
    width: 21px;
    height: 23px;
    border-radius: 4px 0 0 4px;
}

.param-tabs .active {
    background-color: #18ce5f;
}

.position-tip {
    position: absolute;
    left: 192px;
    bottom: 55px;
    width: 165px;
    height: 39px;
    padding: 4px 8px;
    border-radius: 4px;
    background-color: #1b1b1c;
    font-size: 10px;
    line-height: 13px;
    white-space: nowrap;
}

.steps {
    position: absolute;
    left: 96px;
    bottom: 9px;
    width: 357px;
    height: 37px;
    padding: 0 10px 0 7px;
    border-radius: 4px;
    background-color: #4b4b4d;
    display: flex;
    align-items: center;
    gap: 4px;
    font-size: 10px;
    white-space: nowrap;
}

.play {
    width: 22px;
    height: 22px;
    border-radius: 4px;
    background-color: #18ce5f;
}

.steps input[type="range"] {
    appearance: none;
    flex: 1;
    min-width: 0;
    height: 14px;
}

.steps input::-webkit-slider-runnable-track {
    height: 3px;
    background-color: #18ce5f;
}

.steps input::-webkit-slider-thumb {
    appearance: none;
    width: 13px;
    height: 13px;
    margin-top: -5px;
    border-radius: 50%;
    background-color: #18ce5f;
}

.spin {
    display: flex;
    align-items: center;
    width: 52px;
    height: 22px;
    margin-right: 4px;
    padding: 0 4px 0 3px;
    border: 1px solid #69696b;
    border-radius: 4px;
    font-size: 11px;
}

.spin input {
    flex: 1;
    min-width: 0;
}

.spin span::before, .spin span::after {
    content: "";
    display: block;
    border: 3px solid transparent;
    border-top: 0;
    border-bottom: 3px solid #999;
}

.spin span::after {
    margin-top: 7px;
    border-top: 3px solid #999;
    border-bottom: 0;
}

.actions {
    position: absolute;
    right: 6px;
    bottom: 4px;
    display: grid;
    gap: 3px;
}

.actions div {
    display: flex;
    gap: 8px;
    padding: 8px;
    border-radius: 8px;
    background-color: #2f2f31;
}

.actions button {
    width: 28px;
    height: 28px;
    border-radius: 4px;
    background-color: #58585c;
}

.actions .wide {
    width: 117px;
}

.actions .green {
    background-color: #18ce5f;
    color: #fff;
}

/* sidebar */
.sidebar {
    display: flex;
    flex-direction: column;
    min-width: 0;
    padding: 0 1px 7px 8px;
    background-color: #4b4b4d;
}

.head {
    display: flex;
    align-items: center;
    height: 33px;
}

.head h1 {
    margin-left: 3px;
    font-size: 15px;
}

.head-tools {
    display: flex;
    margin-left: auto;
}

.head-tools button {
    width: 22px;
}

.fold {
    margin: 0 3px;
}

.filaments {
    display: grid;
    grid-template-columns: repeat(4, 1fr);
    gap: 5px 4px;
    margin-right: 7px;
}

.filaments button {
    position: relative;
    height: 33px;
    border-radius: 4px;
    font-size: 10px;
    color: #222;
}

.filaments span {
    display: block;
}

.filaments span::after {
    content: "";
    display: inline-block;
    margin: 0 0 2px 2px;
    border: 3px solid transparent;
    border-top: 3px solid;
    border-bottom: 0;
}

.filaments .f1 { background-color: #0080ff; }
.filaments .f2 { background-color: #0ff; }
.filaments .f3 { background-color: #fff; }
.filaments .f4 { background-color: #004080; color: #ddd; }
.filaments .f5 { background-color: #000; color: #ddd; }

.filaments .selected {
    outline: 2px solid #18b458;
}

.filaments .selected span {
    border: 1px solid #ddd;
    border-radius: 4px;
    line-height: 14px;
}

.filaments .selected span::after {
    border-top: 0;
    border-bottom: 3px solid;
}

.pointer {
    position: absolute;
    right: 5px;
    bottom: -2px;
}

.preset {
    display: flex;
    height: 19px;
    margin: 2px -1px 0 -2px;
    border: 1px solid #2c8a51;
    border-radius: 4px 0 0 4px;
    line-height: 17px;
}

.preset .select {
    flex: 1;
    border: 0;
}

.preset .select::after {
    border-top: 4px solid #888;
}

.preset select {
    padding-left: 6px;
}

.preset span {
    display: flex;
    align-items: center;
    justify-content: center;
    gap: 4px;
    width: 62px;
    border-left: 1px solid #2c8a51;
}

.preset button {
    width: 17px;
    border-left: 1px solid #2c8a51;
}

.object-head {
    height: 28px;
    padding-bottom: 2px;
}

.object-head .fold {
    margin-left: auto;
}

.objects {
    position: relative;
    border: 1px solid #616163;
    border-radius: 4px;
    overflow: hidden;
    font-size: 10px;
}

.objects table {
    width: calc(100% - 4px);
    border-collapse: collapse;
    table-layout: fixed;
}

.objects th {
    height: 18px;
    padding: 0;
    border-right: 1px solid #616163;
    border-bottom: 1px solid #616163;
    font-weight: normal;
}

.objects th:last-child {
    border-right: 0;
}

.objects th:first-child {
    width: 125px;
}

.objects th:nth-child(2) {
    width: 23px;
}

.objects th:nth-child(3) {
    width: 55px;
}

.objects td {
    height: 19px;
    padding: 0;
    white-space: nowrap;
    overflow: hidden;
}

.objects td:first-child {
    padding-left: 25px;
}

.objects td:nth-child(2), .objects td:nth-child(3) {
    text-align: center;
}

.objects td:last-child {
    padding-left: 9px;
}

.objects b {
    display: block;
    width: 23px;
    height: 14px;
    margin: 0 auto;
    border-radius: 7px;
    background-color: #0080ff;
    color: #0a1a3a;
    font-weight: 500;
    line-height: 14px;
}

.eye {
    display: block;
    width: 10px;
    height: 8px;
    margin: 0 auto;
}

.palette {
    display: block;
    width: 11px;
    height: 10px;
}

.objects .plate-row td {
    padding-left: 13px;
    background-color: #18ce5f;
    color: #e8e8e8;
}

.plate-row td::before {
    content: "";
    float: left;
    margin: 7px 0 0 -10px;
    border: 3px solid transparent;
    border-top: 3px solid #888;
}

.scroll-x {
    width: calc(100% - 12px);
    height: 4px;
    border-radius: 2px;
    background-color: #77777a;
}

.scroll-y {
    position: absolute;
    right: 0;
    top: 63px;
    width: 4px;
    height: 44px;
    border-radius: 2px;
    background-color: #858588;
}

.process-head {
    height: 39px;
    margin: 11px -2px 0 -8px;
    padding: 8px 0 0 8px;
    border-top: 1px solid #3b3b3d;
}

.process-head .bar-line {
    height: 12px;
    margin: 0 8px 0 7px;
    background-color: #6a6a6c;
}

.scope {
    display: flex;
    border-radius: 4px;
    background-color: #2f2f31;
    overflow: hidden;
}

.scope button {
    width: 46px;
    height: 15px;
    line-height: 15px;
}

.scope .active {
    background-color: #18ce5f;
}

.process-preset {
    display: flex;
    gap: 6px;
    height: 19px;
    margin-right: 2px;
}

.process-preset .select {
    flex: 1;
    font-size: 10px;
}

.process-preset select {
    padding-left: 4px;
}

/* parameters */
.params {
    position: relative;
    height: 214px;
    margin: 12px 0 0 -8px;
    padding: 8px 8px 0 23px;
    border: 1px solid #2c8a51;
    border-radius: 2px;
    overflow: hidden;
}

.params .scroll-y {
    top: 0;
    height: 50px;
    background-color: #a0a0a2;
}

.params-title {
    display: flex;
    align-items: center;
    height: 22px;
    margin: 0 5px 2px -10px;
}

.params-title h3 {
    margin: 0 8px 0 6px;
    color: #d3ac0a;
    font-size: 11px;
}

.params-title hr {
    flex: 1;
    margin: 0 8px 0 0;
    border: 0;
    border-top: 1px solid #69696b;
}

.rows {
    display: grid;
    grid-template-rows: repeat(8, 1fr);
    height: 181px;
}

.row {
    display: flex;
    align-items: center;
    color: #a5a5a7;
}

.row label {
    flex: 1;
}

.row > div {
    width: 102px;
    color: #ddd;
}

.row > svg {
    margin-right: 5px;
}

.changed {
    color: #d3ac0a;
}

.row .select, .field {
    display: flex;
    height: 19px;
    padding: 0 3px;
    border: 1px solid #69696b;
    border-radius: 4px;
    line-height: 17px;
}

.field input {
    flex: 1;
    min-width: 0;
}

.field span {
    color: #8a8a8c;
}

.hint {
    position: relative;
    flex: 1;
    min-height: 0;
    margin-top: 11px;
    border-radius: 4px;
    background-color: #353537;
    overflow: hidden;
}

.hint > svg {
    display: block;
    width: 100%;
    height: 100%;
}

.hint button {
    position: absolute;
    right: 8px;
    top: 7px;
}

.symbols {
    position: absolute;
}
```
FILE: grid.js
```js
// bed grid: 30 x 30 cells, rows get taller towards the viewer
var grid = document.getElementById("grid");
var cells = 30;

function addLine(x1, y1, x2, y2) {
    var line = document.createElementNS("http://www.w3.org/2000/svg", "line");
    line.setAttribute("x1", x1);
    line.setAttribute("y1", y1);
    line.setAttribute("x2", x2);
    line.setAttribute("y2", y2);
    grid.appendChild(line);
}

for (var i = 1; i < cells; i++) {
    addLine(68 + i * 530 / cells, 220, 39 + i * 589 / cells, 617);

    var y = 220.6 + 11.8 * i + 0.047 * i * i;
    var t = (y - 220) / 397;
    addLine(68 - 29 * t, y, 598 + 30 * t, y);
}
```
